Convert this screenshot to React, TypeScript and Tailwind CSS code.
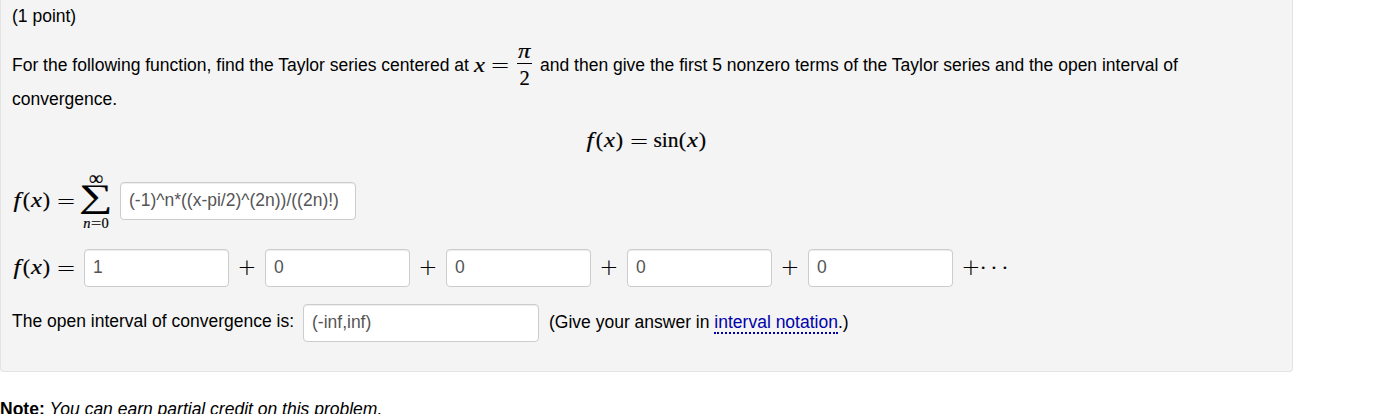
import { JSX, ReactNode, useState } from "react";

type SymProps = {
    children: ReactNode;
    className?: string;
};

type AnswerProps = {
    initial: string;
    className: string;
};

// one math symbol inside a fixed advance width
function Sym({ children, className = "" }: SymProps): JSX.Element {
    return <span className={`inline-flex shrink-0 justify-center font-['Liberation_Serif',serif] leading-none [-webkit-text-stroke:0.2px_black] ${className}`}>{children}</span>;
}

function Equals(): JSX.Element {
    return <span className="flex w-[16px] shrink-0 justify-center font-['DejaVu_Sans',sans-serif] text-[24px] leading-none font-extralight">=</span>;
}

function Plus(): JSX.Element {
    return <span className="flex h-[24px] w-[36px] shrink-0 justify-center font-['DejaVu_Sans',sans-serif] text-[23px] leading-none font-extralight">+</span>;
}

function VarX(): JSX.Element {
    return <Sym className="w-[13px] text-[20.5px] italic"><span className="inline-block scale-x-120">x</span></Sym>;
}

function Paren({ children }: SymProps): JSX.Element {
    return <Sym className="w-[7px] text-[22px]">{children}</Sym>;
}

function FunctionOfX(): JSX.Element {
    return (
        <span className="-mt-[2px] -ml-px flex shrink-0 items-center">
            <Sym className="w-[12px] text-[21px] italic"><span className="inline-block scale-x-120">f</span></Sym>
            <Paren>(</Paren>
            <VarX />
            <Paren>)</Paren>
        </span>
    );
}

function Answer({ initial, className }: AnswerProps): JSX.Element {
    const [value, setValue] = useState<string>(initial);

    return (
        <input
            type="text"
            value={value}
            onChange={(e) => setValue(e.target.value)}
            className={`h-[38px] shrink-0 rounded-[4px] border border-[#ccc] bg-white px-2 pb-[2px] text-[17.5px] text-[#555] shadow-[inset_0_1px_1px_rgba(0,0,0,0.075)] outline-none ${className}`}
        />
    );
}

function App(): JSX.Element {

    const terms = ["1", "0", "0", "0", "0"];

    return (
        <div className="h-[414px] w-[1384px] overflow-hidden bg-white font-['Liberation_Sans',Arial,sans-serif] text-[17.5px] leading-[20px] text-black">
            <div className="h-[372px] w-[1293px] rounded-b-[4px] border border-t-0 border-[#e3e3e3] bg-[#f4f4f4] pl-[11px] whitespace-nowrap">
                <div className="flex h-8 items-center">(1 point)</div>

                <div className="mt-[14px] flex h-[38px] items-center">
                    <span className="w-[461px]">For the following function, find the Taylor series centered at</span>
                    <VarX />
                    <span className="ml-[6px] flex"><Equals /></span>
                    <span className="ml-[9px] flex w-[15px] flex-col items-center">
                        <Sym className="h-[19px] w-4 items-center text-[20.5px] italic"><span className="-mt-[4px] inline-block scale-x-120">π</span></Sym>
                        <span className="h-px w-[15px] bg-black" />
                        <Sym className="mt-[7px] h-[16px] w-4 items-center text-[20.5px]">2</Sym>
                    </span>
                    <span className="ml-2">and then give the first 5 nonzero terms of the Taylor series and the open interval of</span>
                </div>
                <div className="flex h-[30px] items-center">convergence.</div>

                <div className="mt-2 flex h-[38px] items-center pl-[573px]">
                    <FunctionOfX />
                    <span className="ml-[8px] flex"><Equals /></span>
                    <span className="-mt-[2px] ml-[6px] flex items-center">
                        <Sym className="w-[26px] text-[20.5px]"><span className="inline-block scale-x-105">sin</span></Sym>
                        <Paren>(</Paren>
                        <VarX />
                        <Paren>)</Paren>
                    </span>
                </div>

                <div className="mt-[22px] flex h-[38px] items-center">
                    <FunctionOfX />
                    <span className="ml-[8px] flex"><Equals /></span>
                    <span className="ml-[7px] flex h-[58px] w-[30px] flex-col items-center">
                        <Sym className="h-[11px] items-center text-[20px]">∞</Sym>
                        <Sym className="h-[34px] items-center text-[33px]"><span className="-mt-[7px] inline-block scale-x-[1.42]">∑</span></Sym>
                        <Sym className="h-[13px] items-center text-[14.5px]">
                            <i>n</i><span className="mx-[1.5px] inline-block scale-x-125">=</span><span>0</span>
                        </Sym>
                    </span>
                    <Answer initial="(-1)^n*((x-pi/2)^(2n))/((2n)!)" className="ml-[9px] w-[236px]" />
                </div>

                <div className="mt-[29px] flex h-[38px] items-center">
                    <FunctionOfX />
                    <span className="mr-[10px] ml-[8px] flex"><Equals /></span>
                    {terms.map((term, i) => (
                        <span key={i} className="flex items-center">
                            {i > 0 && <Plus />}
                            <Answer initial={term} className="w-[145px]" />
                        </span>
                    ))}
                    <Plus />
                    <Sym className="-ml-[5px] w-[24px] text-[20.5px] tracking-[4px]">···</Sym>
                </div>

                <div className="mt-[17px] flex h-[38px] items-center">
                    <span className="-mt-[4px] w-[291px]">The open interval of convergence is:</span>
                    <Answer initial="(-inf,inf)" className="w-[236px]" />
                    <span className="ml-[10px]">
                        (Give your answer in{" "}
                        <a className="inline-block border-b-2 border-dotted border-[#00a] text-[#00a]">interval notation</a>.)
                    </span>
                </div>
            </div>

            <p className="mt-[27px] whitespace-nowrap">
                <b>Note:</b> <i>You can earn partial credit on this problem.</i>
            </p>
        </div>
    );
}

export default App;
